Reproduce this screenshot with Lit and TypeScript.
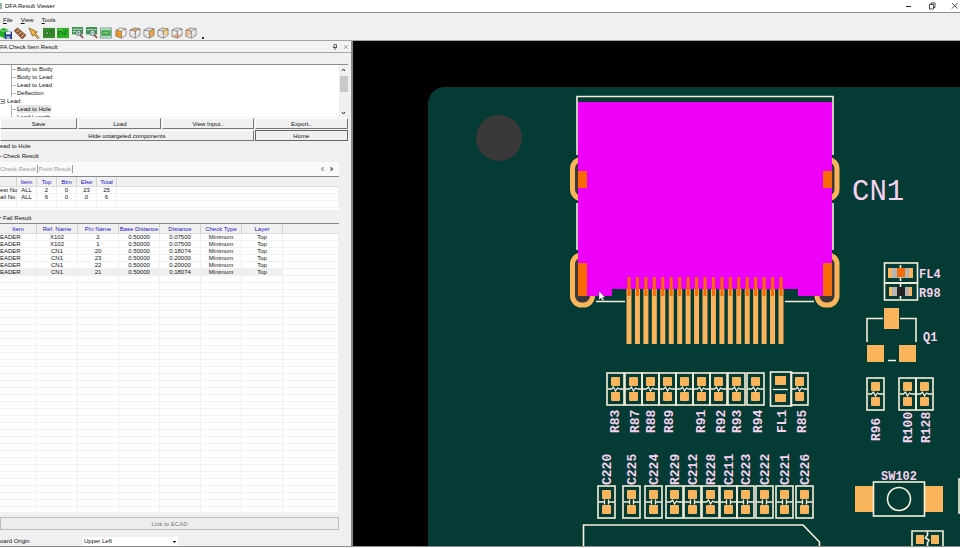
import { LitElement, html, svg, css } from "lit";
import { customElement } from "lit/decorators.js";

/* ---------- shared icon pieces ---------- */

const cube = (face: string) => svg`
  ${face === "front" ? svg`<path d="M1 3.500 7 4.500V12L1 10Z" fill="#f29a1f"/>` : ""}
  ${face === "top" ? svg`<path d="M1 3 6 1 12 2 7 4.500Z" fill="#f0a868"/>` : ""}
  ${face === "right" ? svg`<path d="M7 4.500 12 2V9L7 12Z" fill="#f4a83a"/>` : ""}
  ${face === "back" ? svg`<path d="M6 1 12 2V9L6 7.500Z" fill="#f8d58a"/>` : ""}
  ${face === "bottom" ? svg`<path d="M1 10 6 7.500 12 9 7 12Z" fill="#f6b48c"/>` : ""}
  ${face === "left" ? svg`<path d="M1 3.500 6 1V7.500L1 10Z" fill="#f8c890"/>` : ""}
  <path d="M1 3.500 6 1 12 2 7 4.500ZM1 3.500V10L7 12V4.500M7 12 12 9V2" fill="none" stroke="#77706a" stroke-width=".8"/>
  ${face === "front" ? "" : svg`<path d="M6 1V7.500L1 10M6 7.500 12 9" fill="none" stroke="#aaa5a0" stroke-width=".5"/>`}`;

const lens = svg`
  <circle cx="7" cy="6.500" r="2.800" fill="#e8f4f4" stroke="#45606a" stroke-width=".9"/>
  <path d="M9 8.500 12 12" stroke="#8a4b3a" stroke-width="1.800"/>`;

const icons: Record<string, unknown> = {
  save: svg`<path d="M0 3 4 1 9 3V9L4 12 0 10Z" fill="#22b022"/><path d="M0 3 4 5 9 3" stroke="#9be89b" fill="none"/>
    <rect x="5" y="5" width="8" height="8" fill="#203c8c"/><rect x="6.500" y="5" width="5" height="3" fill="#e8eefc"/><rect x="7" y="10" width="4" height="3" fill="#9fb0d8"/>`,
  measure: svg`<path d="M0 4 4 1 13 9 9 13Z" fill="#9a5c34" stroke="#5e3420" stroke-width=".6"/><path d="M3 5.500 5.500 3M5.500 8 8 5.500M8 10.500 10.500 8" stroke="#f6e2c8"/>`,
  pointer: svg`<path d="M1 1 10 5.500 7.500 6.500 12 11.500 10.500 12.500 6.500 8 5 10Z" fill="#f4b83c" stroke="#6a5020" stroke-width=".8"/>`,
  board: svg`<rect x="0" y="1" width="13" height="11" fill="#35902c"/><path d="M2.500 8.500V5H6V8.500ZM7 3.500H11M8 5.500H12M8 8.500H12" stroke="#2a6a28" fill="#7b9a78"/>`,
  trace: svg`<rect x="0" y="1" width="13" height="11" fill="#2fb024"/><path d="M2 9V5H5L7 8H9V4H11" stroke="#15681a" fill="none"/><path d="M2 3H6" stroke="#7ae070"/>`,
  zoomArea: svg`<rect x="0" y="0" width="12" height="8" fill="#3f9458"/><path d="M1 2.500H11M1 5H10" stroke="#c8ecd0"/>${lens}<path d="M5.500 6.500H8.500M7 5V8" stroke="#2c5c3c" stroke-width=".7"/>`,
  zoomOut: svg`<rect x="0" y="0" width="12" height="8" fill="#3f9458"/><path d="M1 3H11" stroke="#c8ecd0"/>${lens}<path d="M5.500 6.500H8.500" stroke="#2c5c3c" stroke-width=".8"/>`,
  fit: svg`<rect x=".5" y="1" width="12" height="11" fill="#b8dcc8" stroke="#6d9c88" stroke-width=".8"/><rect x="1.500" y="3.500" width="10" height="6" fill="#3fa048"/><path d="M3 7 5 5.500 7 7.500 9 5" stroke="#d8f4d8" stroke-width=".8" fill="none"/>`,
  front: cube("front"), top: cube("top"), right: cube("right"),
  back: cube("back"), bottom: cube("bottom"), left: cube("left"),
};

const toolGroups = [
  [["save", "Save"], ["measure", "Measure"], ["pointer", "Select"]],
  [["board", "Board"], ["trace", "Traces"]],
  [["zoomArea", "Zoom in"], ["zoomOut", "Zoom out"], ["fit", "Fit"]],
  [["front", "Front"], ["top", "Top"], ["right", "Right"], ["back", "Back"], ["bottom", "Bottom"], ["left", "Left"]],
];

/* ---------- result panel ---------- */

const summaryHead = ["", "Item", "Top", "Btm", "Else", "Total", ""];
const summaryRows = [
  ["est No", "ALL", "2", "0", "23", "25", ""],
  ["ail No", "ALL", "6", "0", "0", "6", ""],
  ["", "", "", "", "", "", ""],
];
const failHead = ["Item", "Ref. Name", "Pin Name", "Base Distance", "Distance", "Check Type", "Layer", ""];
const failRows = [
  ["EADER", "X102", "2", "0.50000", "0.07500", "Minimum", "Top", ""],
  ["EADER", "X102", "1", "0.50000", "0.07500", "Minimum", "Top", ""],
  ["EADER", "CN1", "20", "0.50000", "0.18074", "Minimum", "Top", ""],
  ["EADER", "CN1", "23", "0.50000", "0.20000", "Minimum", "Top", ""],
  ["EADER", "CN1", "22", "0.50000", "0.20000", "Minimum", "Top", ""],
  ["EADER", "CN1", "21", "0.50000", "0.18074", "Minimum", "Top", ""],
];
const blankRows = Array.from({ length: 60 }, () => failHead.map(() => ""));

@customElement("result-panel")
class ResultPanel extends LitElement {
  static styles = css`
    :host { display: flex; flex-direction: column; min-height: 0; background: #f0f0f0; color: #111;
      border-right: 2px solid #8c8c8c; font: 6px/8px "Liberation Sans", sans-serif; }
    * { box-sizing: border-box; }
    button, select { font: inherit; color: inherit; margin: 0; }
    .caption { display: flex; align-items: center; height: 12px; border-bottom: 1px solid #a8a8a8; padding-right: 2px; gap: 5px; background: #f3f3f3; }
    .caption h2 { font: inherit; margin: 0 auto 0 0; }
    .cap-btn { border: 0; background: none; padding: 0; width: 6px; height: 6px; display: block; }
    .cap-btn svg { display: block; width: 6px; height: 6px; }
    .tree { display: flex; margin: 11px 3px 0 0; height: 53px; border-top: 1px solid #8c8c8c; background: #fff; }
    .nodes { flex: 1; overflow: hidden; margin: 0; padding: 0; list-style: none; }
    .nodes ul { list-style: none; margin: 0 0 0 11px; padding: 0; border-left: 1px solid #b4b4b4; }
    .nodes li { white-space: nowrap; }
    .leaf { display: flex; align-items: center; height: 8px; }
    .leaf::before { content: ""; width: 4px; border-top: 1px solid #b4b4b4; margin-right: 1px; }
    .leaf.picked span { background: #e6e6e6; }
    .branch { display: flex; align-items: center; height: 8px; gap: 2px; }
    .twisty { width: 5px; height: 5px; border: 1px solid #9a9a9a; border-left: 0; background: linear-gradient(#555, #555) center / 3px 1px no-repeat; }
    .bar { width: 9px; display: flex; flex-direction: column; align-items: center; background: #f0f0f0; }
    .bar svg { width: 9px; height: 9px; }
    .thumb { width: 8px; height: 16px; margin: 2px 0 auto; background: #c8c8c8; }
    .actions { display: grid; grid-template-columns: 77fr 83fr 91fr 93fr; gap: 1px; margin: 1px 3px 0 0; }
    .push { height: 11px; padding: 0; border: 1px solid #fff; border-right-color: #777; border-bottom-color: #777; background: #f0f0f0; text-align: center; }
    .wide { grid-column: span 3; }
    .home { border: 1px solid #666; }
    .where { margin: 0; height: 9px; padding-top: 1px; }
    h3 { font: inherit; margin: 0; }
    .sub { display: flex; align-items: center; gap: 1px; height: 12px; }
    .sub::before { content: ""; width: 2px; border-top: 1px solid #888; }
    .tabs { display: flex; align-items: center; height: 14px; margin-right: 12px; background: #fafafa; }
    .tab { border: 0; border-right: 1px solid #999; background: none; padding: 0 1px; color: #999; height: 8px; }
    .tab:first-child { padding-left: 0; }
    .arrows { margin-left: auto; display: flex; gap: 4px; margin-right: 4px; }
    .arrows button { border: 0; background: none; padding: 0; width: 6px; height: 6px; }
    .arrows svg { display: block; width: 6px; height: 6px; }
    .sheet { margin-right: 12px; border-top: 1px solid #888; background: #fff; overflow: hidden; }
    .sheet.summary { height: 34px; }
    .sheet.fails { flex: 1 1 0; min-height: 0; }
    .fail-title { height: 13px; padding-top: 2px; }
    table { border-collapse: separate; border-spacing: 0; table-layout: fixed; width: 100%; }
    th, td { padding: 0; text-align: center; white-space: nowrap; font-weight: 400; line-height: 6px; }
    th { height: 10px; background: #f0f0f0; color: #2015c8; border-right: 1px solid #d2d2d2; border-bottom: 1px solid #dcdcdc; }
    th:last-child { border-right: 0; }
    td { height: 7px; border-right: 1px solid #f0f0f0; border-bottom: 1px solid #f2f2f2; }
    td:first-child { text-align: left; }
    .current td { background: #efefef; }
    .current td:last-child { background: #fff; }
    .c17 { width: 17px; } .c20 { width: 20px; } .c37 { width: 37px; } .c41 { width: 41px; }
    .link { margin: 5px 12px 0 0; height: 13px; padding: 0; border: 1px solid #bdbdbd; background: #ededed; color: #777; text-align: center; }
    .origin { display: flex; align-items: center; height: 15px; margin-top: 1px; padding-top: 5px; }
    .origin label { width: 83px; }
    .origin select { width: 95px; height: 9px; appearance: none; border: 0; border-radius: 0; padding: 0 0 0 1px; line-height: 8px;
      background: linear-gradient(#222, #222) 90px 4px / 3px 1px no-repeat, linear-gradient(#222, #222) 91px 5px / 1px 1px no-repeat, #fff; }
  `;

  private sheet(head: string[], rows: string[][], widths: string[], current = -1) {
    return html`<table>
      <colgroup>${widths.map((w) => html`<col class=${w} />`)}</colgroup>
      <thead><tr>${head.map((h) => html`<th scope="col">${h}</th>`)}</tr></thead>
      <tbody>${rows.map((r, i) => html`<tr class=${i === current ? "current" : ""}>${r.map((c) => html`<td>${c}</td>`)}</tr>`)}</tbody>
    </table>`;
  }

  render() {
    return html`
      <header class="caption">
        <h2>FA Check Item Result</h2>
        <button class="cap-btn" aria-label="Pin"><svg viewBox="0 0 6 6"><path d="M2 .5H4.500V3.500H2ZM1 3.500H5M3 3.500V6" fill="none" stroke="#444" stroke-width=".8" /></svg></button>
        <button class="cap-btn" aria-label="Close"><svg viewBox="0 0 6 6"><path d="M1 1 5 5M5 1 1 5" stroke="#888" stroke-width=".7" /></svg></button>
      </header>
      <div class="tree">
        <ul class="nodes">
          <li><ul>
            ${["Body to Body", "Body to Lead", "Lead to Lead", "Deflection"].map((t) => html`<li class="leaf"><span>${t}</span></li>`)}
          </ul></li>
          <li><div class="branch"><span class="twisty"></span>Lead</div>
            <ul>
              <li class="leaf picked"><span>Lead to Hole</span></li>
              <li class="leaf"><span>Lead Length</span></li>
            </ul>
          </li>
        </ul>
        <div class="bar">
          <svg viewBox="0 0 9 9"><path d="M3 6 4.500 4 6 6" fill="none" stroke="#333" /></svg>
          <div class="thumb"></div>
          <svg viewBox="0 0 9 9"><path d="M3 4 4.500 6 6 4" fill="none" stroke="#333" /></svg>
        </div>
      </div>
      <div class="actions">
        <button class="push">Save</button><button class="push">Load</button>
        <button class="push">View Input..</button><button class="push">Export..</button>
        <button class="push wide">Hide untargeted components</button><button class="push home">Home</button>
      </div>
      <p class="where">ead to Hole</p>
      <h3 class="sub">Check Result</h3>
      <div class="tabs">
        <button class="tab">Check Result</button><button class="tab">Point Result</button>
        <div class="arrows">
          <button aria-label="Previous"><svg viewBox="0 0 6 6"><path d="M4 1V5L2 3Z" fill="none" stroke="#777" stroke-width=".7" /></svg></button>
          <button aria-label="Next"><svg viewBox="0 0 6 6"><path d="M2 1V5L4 3Z" fill="#999" stroke="#555" stroke-width=".7" /></svg></button>
        </div>
      </div>
      <div class="sheet summary">${this.sheet(summaryHead, summaryRows, ["c17", "c20", "c20", "c20", "c20", "c20", ""])}</div>
      <h3 class="sub fail-title">Fail Result</h3>
      <div class="sheet fails">${this.sheet(failHead, [...failRows, ...blankRows], ["c37", "c41", "c41", "c41", "c41", "c41", "c41", ""], 5)}</div>
      <button class="link" disabled>Link to ECAD</button>
      <div class="origin">
        <label for="origin">oard Origin</label>
        <select id="origin"><option>Upper Left</option><option>Lower Left</option></select>
      </div>`;
  }
}

/* ---------- board view ---------- */

type Part = { x: number; kind: "r" | "c"; name?: string; tx?: number };

const upper: Part[] = [
  { x: 615, kind: "r", name: "R83", tx: 619 }, { x: 633, kind: "r", name: "R87", tx: 639 },
  { x: 650, kind: "r", name: "R88", tx: 655 }, { x: 667, kind: "r", name: "R89", tx: 673 },
  { x: 684, kind: "r" }, { x: 701, kind: "r", name: "R91", tx: 705 },
  { x: 718, kind: "r", name: "R92", tx: 725 }, { x: 736, kind: "r", name: "R93", tx: 741 },
  { x: 755, kind: "r", name: "R94", tx: 762 }, { x: 799, kind: "r", name: "R85", tx: 806 },
];
const lower: Part[] = [
  { x: 606, kind: "c", name: "C220", tx: 611 }, { x: 631, kind: "c", name: "C225", tx: 636 },
  { x: 653, kind: "c", name: "C224", tx: 658 }, { x: 674, kind: "r", name: "R229", tx: 679 },
  { x: 692, kind: "c", name: "C212", tx: 697 }, { x: 710, kind: "r", name: "R228", tx: 715 },
  { x: 728, kind: "c", name: "C211", tx: 733 }, { x: 745, kind: "c", name: "C223", tx: 750 },
  { x: 764, kind: "c", name: "C222", tx: 769 }, { x: 784, kind: "c", name: "C221", tx: 789 },
  { x: 804, kind: "c", name: "C226", tx: 809 },
];
const side: Part[] = [
  { x: 875, kind: "r", name: "R96", tx: 880 }, { x: 907, kind: "r", name: "R100", tx: 912 },
  { x: 924, kind: "r", name: "R128", tx: 930 },
];

@customElement("board-view")
class BoardView extends LitElement {
  static styles = css`
    :host { display: block; background: #000; min-width: 0; min-height: 0; overflow: hidden; }
    svg { display: block; width: 100%; height: 100%; }
    .board { fill: #053b35; }
    .hole { fill: #3a3839; }
    .ring { fill: #3a3839; stroke: #f9b45c; stroke-width: 5; }
    .body { fill: #ee00f8; }
    .hit { fill: #f76a05; }
    .pad { fill: #f9b45c; }
    .term { fill: #b5b5b5; }
    .chip { fill: #242424; }
    .silk { fill: none; stroke: #f7f0da; stroke-width: 1.600; }
    .link { fill: none; stroke: #f7f0da; stroke-width: 1.300; }
    .ref { fill: #f6d2ee; font: bold 12px "Liberation Mono", monospace; }
    .ref.up { font-size: 13px; }
    .ref.big { font: 29px "Liberation Mono", monospace; }
  `;

  private part(p: Part, y: number, labelY: number) {
    const link = p.kind === "r" ? "M-8 16H-4L-2 14 0 18 2 15 4 16H8" : "M-8 16H-2M-2 13.500V18.500M2 13.500V18.500M2 16H8";
    return svg`
      <g transform="translate(${p.x + 0.5} ${y})">
        <rect class="silk" x="-8.500" width="17" height="32"/>
        <rect class="pad" x="-4.500" y="4" width="9" height="9" rx="1"/>
        <rect class="pad" x="-4.500" y="19" width="9" height="9" rx="1"/>
        <path class="link" d=${link}/>
      </g>
      ${p.name ? svg`<text class="ref up" transform="translate(${p.tx} ${labelY}) rotate(-90)">${p.name}</text>` : ""}`;
  }

  render() {
    const pins = Array.from({ length: 19 }, (_, i) => 629 + (i * 152) / 18);
    return html`<svg viewBox="353 41 607 505" preserveAspectRatio="xMinYMin slice" role="img" aria-label="Board layout">
      <path class="board" d="M960 87H445A17 17 0 0 0 428 104V548H960Z" />
      <circle class="hole" cx="499" cy="138" r="23" />
      <path class="silk" d="M577 155V96.500H833V155M577 203V250M833 203V250M596 301.500H625M785 301.500H814" />
      ${[572.5, 817].map((x) => svg`
        <rect class="ring" x=${x} y="159.500" width="20" height="39" rx="9"/>
        <rect class="ring" x=${x} y="255" width="20" height="50" rx="9"/>`)}
      <path class="body" d="M578 102H832V296H798V289H612V296H578Z" />
      ${[578, 823].map((x) => svg`
        <rect class="hit" x=${x} y="171" width="9" height="17"/>
        <rect class="hit" x=${x} y="263" width="9" height="33"/>`)}
      ${pins.map((x) => svg`
        <rect class="pad" x=${x - 2.5} y="289" width="5" height="55"/>
        <rect class="hit" x=${x - 1.5} y="277" width="3" height="19"/>`)}
      <text class="ref big" x="852" y="200">CN1</text>

      <rect class="silk" x="884.500" y="263" width="33" height="20" />
      <path class="silk" d="M900.500 265V281" />
      <rect class="pad" x="888" y="268" width="25" height="10" />
      <rect class="term" x="892" y="268" width="17" height="10" />
      <rect class="hit" x="897" y="268" width="8" height="9" />
      <text class="ref" x="919" y="278">FL4</text>
      <rect class="silk" x="884.500" y="283" width="33" height="17" />
      <path class="silk" d="M900.500 284V299" />
      <rect class="pad" x="889" y="287" width="23" height="9" />
      <rect class="term" x="892" y="287" width="17" height="9" />
      <rect class="chip" x="897" y="287" width="8" height="9" />
      <text class="ref" x="919" y="297">R98</text>

      <path class="silk" d="M867 342V318.500H883M900 318.500H916V342M888 360.500H896" />
      <rect class="pad" x="884" y="308" width="15" height="21" />
      <rect class="pad" x="867" y="345" width="17" height="17" />
      <rect class="pad" x="899" y="345" width="17" height="17" />
      <text class="ref" x="923" y="341">Q1</text>

      ${upper.map((p) => this.part(p, 373, 433))}
      <rect class="silk" x="770.500" y="372" width="21" height="34" />
      <rect class="pad" x="775" y="376" width="11" height="9" />
      <rect class="pad" x="775" y="394" width="11" height="8" />
      <path class="link" d="M773 389.500H788" />
      <text class="ref up" transform="translate(786 433) rotate(-90)">FL1</text>

      ${lower.map((p) => this.part(p, 486, 485))}
      ${side.map((p, i) => this.part(p, 378, i ? 443 : 441))}

      <rect class="pad" x="855" y="486" width="18" height="26" />
      <rect class="pad" x="925" y="486" width="18" height="26" />
      <rect class="silk" x="873.500" y="482" width="51" height="34" />
      <circle class="silk" cx="899" cy="499" r="11.500" />
      <text class="ref" x="881" y="480">SW102</text>
      <path class="silk" d="M583.500 548V525H803L819.500 542V548M962 479H959V513H962" />
      <path class="silk" d="M912 548V531H943V548M927.500 531V535L925.500 538 929 540 927.500 543V548" />
      <rect class="pad" x="916" y="535" width="8" height="9" />
      <rect class="pad" x="931" y="535" width="8" height="9" />
      <path d="M599 291V300L601 298 602.500 301 604 300 602.500 297.500H605Z" fill="#fff" stroke="#444" stroke-width=".4" />
    </svg>`;
  }
}

/* ---------- window ---------- */

@customElement("app-root")
class AppRoot extends LitElement {
  static styles = css`
    :host { display: flex; flex-direction: column; height: 100vh; overflow: hidden; background: #f0f0f0; color: #111;
      font: 6px/8px "Liberation Sans", sans-serif; }
    * { box-sizing: border-box; }
    button { font: inherit; color: inherit; border: 0; padding: 0; background: none; }
    .title { display: flex; align-items: center; height: 13px; background: #fff; border-bottom: 1px solid #8f8f8f; gap: 3px; }
    .title h1 { font: inherit; margin: 0 auto 0 0; }
    .logo { width: 2px; height: 6px; background: #9ab8a4; }
    .sys { display: flex; gap: 15px; padding-right: 1px; }
    .sys button, .sys svg { display: block; width: 8px; height: 8px; }
    .menu { display: flex; height: 13px; align-items: center; gap: 8px; padding-left: 3px; }
    .tools { display: flex; height: 15px; align-items: center; gap: 3px; border-bottom: 1px solid #a5a5a5; }
    .group { display: flex; gap: 2px; }
    .tool, .tool svg { display: block; width: 12px; height: 12px; }
    .more { align-self: flex-end; width: 3px; height: 5px; margin-left: 2px; }
    .more::before { content: ""; display: block; width: 2px; height: 2px; background: #333; }
    .main { flex: 1; display: grid; grid-template-columns: 353px 1fr; min-height: 0; border-bottom: 1px solid #8c8c8c; }
    .foot { height: 1px; background: #fff; }
  `;

  render() {
    return html`
      <header class="title">
        <span class="logo"></span>
        <h1>DFA Result Viewer</h1>
        <div class="sys">
          <button aria-label="Minimize"><svg viewBox="0 0 8 8"><path d="M1 4.500H6" stroke="#222" /></svg></button>
          <button aria-label="Restore"><svg viewBox="0 0 8 8"><path d="M1.500 2.500H5.500V7H1.500ZM3 2.500V1H7V5.500H5.500" fill="none" stroke="#222" stroke-width=".8" /></svg></button>
          <button aria-label="Close"><svg viewBox="0 0 8 8"><path d="M1 1 6.500 6.500M6.500 1 1 6.500" stroke="#222" stroke-width=".8" /></svg></button>
        </div>
      </header>
      <nav class="menu">
        <button><u>F</u>ile</button><button><u>V</u>iew</button><button><u>T</u>ools</button>
      </nav>
      <div class="tools">
        ${toolGroups.map((g) => html`<div class="group">
          ${g.map(([id, name]) => html`<button class="tool" aria-label=${name}><svg viewBox="0 0 13 13">${icons[id]}</svg></button>`)}
        </div>`)}
        <button class="more" aria-label="More tools"></button>
      </div>
      <main class="main">
        <result-panel></result-panel>
        <board-view></board-view>
      </main>
      <div class="foot"></div>`;
  }
}
